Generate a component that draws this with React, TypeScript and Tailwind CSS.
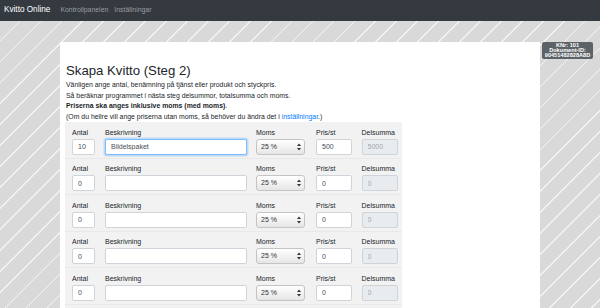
import React from 'react';

const rows = [
    { antal: '10', desc: 'Bildelspaket', pris: '500', sum: '5000', focus: true },
    { antal: '0', desc: '', pris: '0', sum: '0' },
    { antal: '0', desc: '', pris: '0', sum: '0' },
    { antal: '0', desc: '', pris: '0', sum: '0' },
    { antal: '0', desc: '', pris: '0', sum: '0' },
    { antal: '0', desc: '', pris: '0', sum: '0' },
];

const inputCls =
    'mt-[1px] block h-[16px] w-full rounded-[2px] border bg-white px-[5px] text-[7px] leading-[14px] text-[#495057] outline-none';

function Label({ children }: { children: React.ReactNode }) {
    return <div className="h-[10px] text-[7px] leading-[10px] text-[#212529]">{children}</div>;
}

function MomsSelect() {
    return (
        <div className="relative mt-[1px] h-[16px] w-[49px]">
            <select
                defaultValue="25"
                className="block h-full w-full appearance-none rounded-[3px] border border-[#c4c4c4] bg-gradient-to-b from-white to-[#e6e6e6] pl-[4px] text-[7px] leading-[14px] text-[#333] outline-none"
            >
                <option value="25">25 %</option>
                <option value="12">12 %</option>
                <option value="6">6 %</option>
                <option value="0">0 %</option>
            </select>
            <svg className="pointer-events-none absolute right-[4px] top-[4px]" width="4" height="8" viewBox="0 0 4 8">
                <path d="M0 3 L2 0.5 L4 3 Z M0 5 L2 7.5 L4 5 Z" fill="#333" />
            </svg>
        </div>
    );
}

export default function App() {
    return (
        <div className="h-[308px] overflow-hidden bg-[repeating-linear-gradient(135deg,#d9d9d9_0px,#d9d9d9_13.6px,#f3f3f3_13.6px,#f3f3f3_14.8px)] font-['Liberation_Sans',Arial,sans-serif]">
            <nav className="flex h-[21px] items-center bg-[#343a40] px-[4px]">
                <span className="text-[8.2px] text-white">Kvitto Online</span>
                <a href="#" className="ml-[10px] text-[6.9px] text-[#9a9da0]">
                    Kontrollpanelen
                </a>
                <a href="#" className="ml-[6px] text-[6.9px] text-[#9a9da0]">
                    Inställningar
                </a>
            </nav>

            <div className="relative pt-[21px]">
                <div className="absolute right-[7px] top-[21px] flex h-[16.5px] w-[51px] flex-col items-center justify-center rounded-[2px] bg-[#5c6268] text-[5.6px] font-bold text-white">
                    <span className="block leading-[5.1px]">KNr: 101</span>
                    <span className="block leading-[5.1px]">Dokument-ID:</span>
                    <span className="block leading-[5.1px]">90451482828A8D</span>
                </div>

                <div className="mx-[60px] min-h-[300px] bg-white pl-[5px] pt-[20px]">
                    <h1 className="pl-[1px] text-[13.2px] leading-[17px] text-[#212529]">Skapa Kvitto (Steg 2)</h1>
                    <div className="mt-[1px] pl-[1px] text-[6.9px] leading-[10.5px] text-[#212529]">
                        <p>Vänligen ange antal, benämning på tjänst eller produkt och styckpris.</p>
                        <p>Så beräknar programmet i nästa steg delsummor, totalsumma och moms.</p>
                        <p>
                            <b>Priserna ska anges inklusive moms (med moms)</b>.
                        </p>
                        <p>
                            (Om du hellre vill ange priserna utan moms, så behöver du ändra det i{' '}
                            <a href="#" className="text-[#007bff]">
                                inställningar
                            </a>
                            .)
                        </p>
                    </div>

                    <div className="w-[337px]">
                        {rows.map((r, i) => (
                            <div
                                key={i}
                                className="flex h-[36.5px] border-b border-[#e9e9e9] bg-[#f2f2f2] pl-[7px] pt-[5.5px]"
                            >
                                <div className="w-[23px]">
                                    <Label>Antal</Label>
                                    <input defaultValue={r.antal} className={inputCls + ' border-[#ced4da]'} />
                                </div>
                                <div className="ml-[10px] w-[142px]">
                                    <Label>Beskrivning</Label>
                                    <input
                                        defaultValue={r.desc}
                                        className={
                                            r.focus
                                                ? inputCls + ' border-[#80bdff] shadow-[0_0_0_1.5px_rgba(0,123,255,0.2)]'
                                                : inputCls + ' border-[#ced4da]'
                                        }
                                    />
                                </div>
                                <div className="ml-[9px] w-[49px]">
                                    <Label>Moms</Label>
                                    <MomsSelect />
                                </div>
                                <div className="ml-[11px] w-[36px]">
                                    <Label>Pris/st</Label>
                                    <input defaultValue={r.pris} className={inputCls + ' border-[#ced4da]'} />
                                </div>
                                <div className="ml-[9.5px] w-[36px]">
                                    <Label>Delsumma</Label>
                                    <input
                                        disabled
                                        defaultValue={r.sum}
                                        className="mt-[1px] block h-[16px] w-full rounded-[2px] border border-[#ced4da] bg-[#e9ecef] px-[5px] text-[7px] leading-[14px] text-[#a3a8ad] outline-none"
                                    />
                                </div>
                            </div>
                        ))}
                    </div>
                </div>
            </div>
        </div>
    );
}
